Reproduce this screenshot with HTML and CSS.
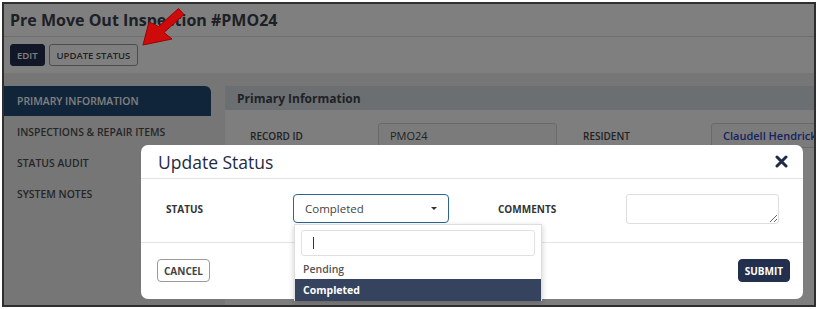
FILE: index.html
```html
<!DOCTYPE html>
<html>
<head>
    <title>Pre Move Out Inspection #PMO24</title>
    <link rel="stylesheet" href="styles.css">
</head>
<body>
    <div class="shot">
        <div class="page">
            <header class="title-bar">
                <h1>Pre Move Out Inspection #PMO24</h1>
            </header>
            <div class="toolbar">
                <button class="btn btn-dark">EDIT</button>
                <button class="btn btn-outline">UPDATE STATUS</button>
            </div>
            <div class="content">
                <nav class="side-nav">
                    <a class="active">PRIMARY INFORMATION</a>
                    <a>INSPECTIONS &amp; REPAIR ITEMS</a>
                    <a>STATUS AUDIT</a>
                    <a>SYSTEM NOTES</a>
                </nav>
                <section class="panel">
                    <div class="panel-head">Primary Information</div>
                    <div class="panel-body">
                        <div class="field-row">
                            <span class="field-label">RECORD ID</span>
                            <div class="field-box">PMO24</div>
                            <span class="field-label">RESIDENT</span>
                            <div class="field-box link">Claudell Hendricks</div>
                        </div>
                    </div>
                </section>
            </div>
        </div>

        <div class="overlay">
            <div class="modal">
                <div class="modal-head">
                    <h2>Update Status</h2>
                    <svg class="close" width="13" height="13" viewBox="0 0 13 13">
                        <path d="M2 2 L11 11 M11 2 L2 11" stroke="#1f2b45" stroke-width="3" stroke-linecap="round"/>
                    </svg>
                </div>
                <div class="modal-body">
                    <span class="modal-label">STATUS</span>
                    <div class="select">
                        <span>Completed</span>
                        <span class="caret"></span>
                    </div>
                    <span class="modal-label">COMMENTS</span>
                    <textarea class="comments"></textarea>
                </div>
                <div class="modal-foot">
                    <button class="btn btn-outline btn-lg">CANCEL</button>
                    <button class="btn btn-dark btn-lg">SUBMIT</button>
                </div>

                <div class="dropdown">
                    <div class="search"><span class="cursor"></span></div>
                    <div class="option">Pending</div>
                    <div class="option selected">Completed</div>
                </div>
            </div>
        </div>

        <svg class="arrow" width="200" height="60" viewBox="0 0 200 60">
            <polygon points="139,41 145,18 154.5,22.5 174.5,4.5 180,10.5 160,28.5 168,35" fill="#cf0a0a" stroke="#a00000" stroke-width="1" stroke-linejoin="round"/>
        </svg>
    </div>
</body>
</html>
```

FILE: styles.css
```css
* {
    box-sizing: border-box;
}
body {
    margin: 0;
    padding: 2px 0 0 2px;
    background-color: #fff;
    font-family: "Open Sans", Arial, sans-serif;
}
.shot {
    position: relative;
    width: 814px;
    height: 305px;
    border: 2px solid #2e2e2e;
    overflow: hidden;
    background-color: #fff;
}
.page {
    height: 100%;
    display: flex;
    flex-direction: column;
}
.title-bar {
    height: 33px;
    padding: 0 6px;
    border-bottom: 1px solid #dcdcdc;
    display: flex;
    align-items: center;
}
.title-bar h1 {
    margin: 0;
    font-size: 16px;
    font-weight: 700;
    color: #3a404b;
}
.toolbar {
    height: 36px;
    padding: 7px 6px;
    display: flex;
    gap: 4px;
}
.btn {
    height: 22px;
    padding: 0 6px;
    border-radius: 3px;
    font-family: "Open Sans", Arial, sans-serif;
    font-size: 9.5px;
    font-weight: 600;
    cursor: pointer;
}
.btn-dark {
    background-color: #222f4d;
    border: 1px solid #222f4d;
    color: #fff;
}
.btn-outline {
    background-color: #fff;
    border: 1px solid #9a9a9a;
    color: #444;
}
.toolbar .btn-outline {
    padding: 0 7px;
}
.btn-lg {
    height: 23px;
    padding: 0 6px;
    border-radius: 4px;
    font-size: 10px;
    font-weight: 700;
}
.content {
    flex: 1;
    background-color: #ececec;
    padding-top: 13px;
    display: flex;
    gap: 14px;
}
.side-nav {
    width: 207px;
    flex-shrink: 0;
    display: flex;
    flex-direction: column;
}
.side-nav a {
    height: 31px;
    padding-left: 13px;
    display: flex;
    align-items: center;
    font-size: 10.4px;
    font-weight: 600;
    color: #4c4c4c;
}
.side-nav a.active {
    height: 30px;
    background-color: #234a74;
    border-radius: 0 6px 0 0;
    color: #fff;
}
.panel {
    flex: 1;
    min-width: 0;
    background-color: #fdfdfd;
    border-radius: 4px 0 0 0;
}
.panel-head {
    height: 24px;
    padding-left: 12px;
    background-color: #d9dee2;
    display: flex;
    align-items: center;
    font-size: 12px;
    font-weight: 700;
    color: #3e444c;
}
.panel-body {
    padding: 13px 0 0 25px;
}
.field-row {
    display: grid;
    grid-template-columns: 102px 179px 102px 140px;
    column-gap: 26px;
    align-items: center;
}
.field-label {
    font-size: 10px;
    font-weight: 600;
    color: #444;
}
.field-box {
    height: 25px;
    padding-left: 11px;
    border: 1px solid #d4d4d4;
    border-radius: 3px;
    background-color: #f7f7f7;
    display: flex;
    align-items: center;
    font-size: 11px;
    color: #444;
    white-space: nowrap;
}
.field-box.link {
    color: #2d46c4;
    font-weight: 600;
}

/* modal */
.overlay {
    position: absolute;
    inset: 0;
    background-color: rgba(0, 0, 0, 0.5);
    padding: 141px 0 0 137px;
}
.modal {
    position: relative;
    width: 662px;
    height: 154px;
    background-color: #fff;
    border-radius: 7px;
}
.modal-head {
    height: 34px;
    padding: 0 15px 0 17px;
    border-bottom: 1px solid #e4e4e4;
    display: flex;
    justify-content: space-between;
    align-items: center;
}
.modal-head h2 {
    margin: 0;
    font-size: 17.5px;
    font-weight: 400;
    color: #1f2b45;
}
.modal-body {
    height: 64px;
    padding: 0 0 4px 25px;
    border-bottom: 1px solid #e4e4e4;
    display: grid;
    grid-template-columns: 127px 205px 128px 153px;
    align-items: center;
}
.modal-label {
    font-size: 10px;
    font-weight: 700;
    color: #333;
}
.select {
    width: 156px;
    height: 29px;
    padding: 0 11px;
    border: 1px solid #2b6690;
    border-radius: 4px;
    display: flex;
    justify-content: space-between;
    align-items: center;
    font-size: 11.5px;
    color: #444;
}
.caret {
    width: 0;
    height: 0;
    border-left: 3px solid transparent;
    border-right: 3px solid transparent;
    border-top: 3px solid #333;
}
.comments {
    width: 153px;
    height: 30px;
    border: 1px solid #dedede;
    border-radius: 3px;
    margin: 0;
}
.modal-foot {
    padding: 16px 13px 0 16px;
    display: flex;
    justify-content: space-between;
}
.dropdown {
    position: absolute;
    left: 153px;
    top: 79px;
    width: 248px;
    height: 77px;
    background-color: #fff;
    border: 1px solid #dedede;
    box-shadow: 0 2px 6px rgba(0, 0, 0, 0.2);
    padding-top: 5px;
}
.search {
    height: 26px;
    margin: 0 6px 3px 6px;
    padding-left: 11px;
    border: 1px solid #e0e0e0;
    border-radius: 3px;
    display: flex;
    align-items: center;
}
.cursor {
    width: 1px;
    height: 12px;
    background-color: #333;
}
.option {
    height: 20px;
    padding-left: 8px;
    display: flex;
    align-items: center;
    font-size: 10.5px;
    font-weight: 600;
    color: #555;
}
.option.selected {
    height: 22px;
    background-color: #35435f;
    color: #fff;
    font-weight: 700;
}
.arrow {
    position: absolute;
    left: 0;
    top: 0;
}
```
